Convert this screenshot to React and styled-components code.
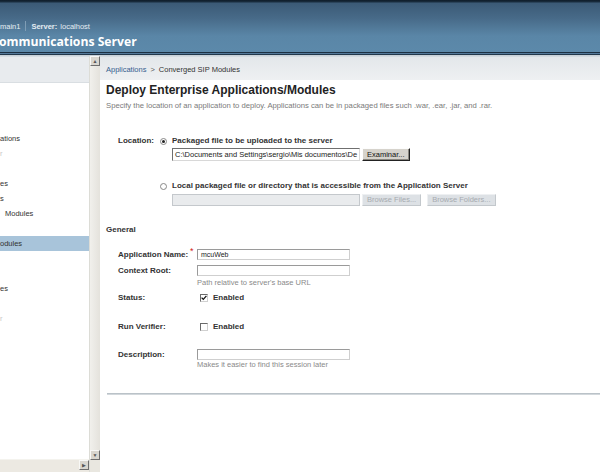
import React from 'react'
import styled, { createGlobalStyle } from 'styled-components'

const GlobalStyle = createGlobalStyle`
  html, body {
    margin: 0;
    padding: 0;
    overflow: hidden;
  }
  body {
    font-family: "Liberation Sans", Arial, sans-serif;
  }
`

const Page = styled.div`
  width: 600px;
  height: 472px;
  display: flex;
  flex-direction: column;
  overflow: hidden;
  background: #fff;
`

const Header = styled.div`
  height: 56px;
  flex: none;
  background: linear-gradient(
    to bottom,
    #0e1c29 0px,
    #1a2e40 2px,
    #3b5a76 3px,
    #476a88 18px,
    #5a86a7 36px,
    #5c89aa 52px,
    #1c3042 52px,
    #1c3042 53px,
    #54799a 53px,
    #54799a 54px,
    #22384b 54px,
    #22384b 55px,
    #c9d2d9 55px
  );
  padding: 21px 0 0 0;
  box-sizing: border-box;
  color: #fff;
  overflow: hidden;
`

const InfoLine = styled.div`
  display: flex;
  align-items: center;
  height: 10px;
  font-size: 7.5px;
  color: #e4ecf2;
  white-space: nowrap;
`

const InfoSep = styled.span`
  width: 1px;
  height: 10px;
  background: #7f9db5;
  margin: 0 5px 0 5px;
`

const InfoKey = styled.b`
  font-weight: 700;
  margin-right: 3px;
`

const ProductName = styled.div`
  margin-top: 4px;
  font-family: "Open Sans", "Liberation Sans", sans-serif;
  font-weight: 700;
  font-size: 12.2px;
  line-height: 14px;
  color: #fff;
  white-space: nowrap;
  margin-left: -1px;
`

const Body = styled.div`
  flex: 1;
  display: flex;
  min-height: 0;
`

const Sidebar = styled.div`
  width: 89px;
  flex: none;
  display: flex;
  flex-direction: column;
  background: #fff;
`

const SidebarTop = styled.div`
  height: 27px;
  flex: none;
  background: #e8ebee;
  border-top: 1px solid #d6dde2;
  border-bottom: 1px solid #d9dee2;
  box-sizing: border-box;
`

const NavList = styled.div`
  flex: 1;
  padding-top: 48px;
  overflow: hidden;
`

const NavItem = styled.div`
  height: 15px;
  line-height: 15px;
  font-size: 7.5px;
  white-space: nowrap;
  color: ${p => (p.$faint ? '#c8c8c8' : '#333')};
  padding-left: ${p => p.$indent || 0}px;
  background: ${p => (p.$selected ? '#a8c4da' : 'transparent')};
`

const HScroll = styled.div`
  height: 12px;
  flex: none;
  display: flex;
  justify-content: flex-end;
  background: #ece9e2;
  border-top: 1px solid #f4f3ee;
`

const ScrollBtn = styled.div`
  width: 10px;
  height: 10px;
  flex: none;
  box-sizing: border-box;
  background: #d9d6cf;
  border: 1px solid;
  border-color: #f8f8f6 #6e6e6e #6e6e6e #f8f8f6;
  display: flex;
  align-items: center;
  justify-content: center;
  font-size: 5px;
  color: #555;
  line-height: 1;
`

const VScroll = styled.div`
  width: 11px;
  flex: none;
  display: flex;
  flex-direction: column;
  background: linear-gradient(to right, #f1f0ec, #e4e2dc);
  border-left: 1px solid #dcdcd6;
  box-sizing: border-box;
`

const Track = styled.div`
  flex: 1;
`

const Corner = styled.div`
  height: 12px;
  flex: none;
  background: #e9e7e0;
`

const Main = styled.div`
  flex: 1;
  display: flex;
  flex-direction: column;
  min-width: 0;
`

const Breadcrumb = styled.div`
  height: 24px;
  flex: none;
  box-sizing: border-box;
  background: linear-gradient(to bottom, #e3e7ea, #eef0f2);
  border-top: 1px solid #d3dadf;
  padding: 8px 0 0 6px;
  font-size: 7.5px;
  line-height: 10px;
  color: #333;
  white-space: nowrap;
`

const Crumb = styled.span`
  color: #35608f;
`

const Arrow = styled.span`
  margin: 0 4px;
  color: #555;
`

const Content = styled.div`
  flex: 1;
  padding: 3px 0 0 6px;
`

const Title = styled.h1`
  margin: 0;
  font-size: 12px;
  line-height: 14px;
  font-weight: 700;
  color: #222;
  white-space: nowrap;
`

const Intro = styled.div`
  margin-top: 4px;
  font-size: 7.7px;
  line-height: 10px;
  color: #7a7a7a;
  white-space: nowrap;
`

const LocationBlock = styled.div`
  margin-top: 25px;
  padding-left: 12px;
`

const ChoiceRow = styled.div`
  display: grid;
  grid-template-columns: 42px 12px auto;
  align-items: center;
  margin-top: ${p => p.$gap || 0}px;
`

const Label = styled.span`
  font-size: 8px;
  line-height: 10px;
  font-weight: 700;
  color: #333;
  white-space: nowrap;
`

const Radio = styled.span`
  width: 7px;
  height: 7px;
  border-radius: 50%;
  border: 1px solid #888;
  box-sizing: border-box;
  background: #fff;
  display: flex;
  align-items: center;
  justify-content: center;
  &::after {
    content: '';
    width: 3px;
    height: 3px;
    border-radius: 50%;
    background: ${p => (p.$checked ? '#222' : 'transparent')};
  }
`

const FileRow = styled.div`
  display: flex;
  gap: ${p => p.$gap || 2}px;
  margin: ${p => p.$top}px 0 0 54px;
`

const FileField = styled.div`
  width: 188px;
  height: ${p => p.$h}px;
  box-sizing: border-box;
  border: 1px solid;
  border-color: ${p => (p.$disabled ? '#c4c8cc' : '#6f6f6f #d8d8d8 #d8d8d8 #6f6f6f')};
  background: ${p => (p.$disabled ? '#e9ebed' : '#fff')};
  font-size: 7.5px;
  line-height: ${p => p.$h - 2}px;
  padding-left: 2px;
  color: #222;
  white-space: nowrap;
  overflow: hidden;
`

const Button = styled.div`
  height: ${p => p.$h}px;
  box-sizing: border-box;
  padding: 0 4px;
  font-size: 7.5px;
  line-height: ${p => p.$h - 2}px;
  white-space: nowrap;
  border: 1px solid;
  ${p =>
    p.$disabled
      ? `
    background: #dde1e5;
    color: #a7abb0;
    border-color: #eef0f2 #c3c8cc #c3c8cc #eef0f2;
    margin-left: ${p.$left || 0}px;
  `
      : `
    background: #d6d3cc;
    color: #111;
    border-color: #fdfdfd #222 #222 #fdfdfd;
    box-shadow: inset -1px -1px 0 #8a877f;
  `}
`

const Section = styled.div`
  margin-top: 19px;
  font-size: 8px;
  line-height: 10px;
  font-weight: 700;
  color: #333;
`

const Form = styled.div`
  margin-top: 14px;
  padding-left: 12px;
  display: flex;
  flex-direction: column;
`

const Field = styled.div`
  display: grid;
  grid-template-columns: 79px auto;
  align-items: center;
  margin-top: ${p => p.$gap || 0}px;
`

const LabelWrap = styled.span`
  position: relative;
  display: inline-flex;
`

const Required = styled.span`
  position: absolute;
  left: 72px;
  top: -4px;
  color: #d02020;
  font-size: 9px;
  line-height: 10px;
`

const TextBox = styled.div`
  width: 153px;
  height: 11px;
  box-sizing: border-box;
  border: 1px solid;
  border-color: #9a9a9a #cfcfcf #cfcfcf #9a9a9a;
  background: #fff;
  font-size: 7px;
  line-height: 9px;
  padding-left: 3px;
  color: #222;
`

const Help = styled.div`
  margin: ${p => p.$top || 0}px 0 0 79px;
  font-size: 7.5px;
  line-height: 10px;
  color: #8a8a8a;
  white-space: nowrap;
`

const Check = styled.span`
  display: inline-flex;
  align-items: center;
  gap: 5px;
  padding-left: 3px;
`

const Box = styled.span`
  width: 8px;
  height: 8px;
  box-sizing: border-box;
  border: 1px solid;
  border-color: #6a6a6a #d0d0d0 #d0d0d0 #6a6a6a;
  background: #fff;
  display: flex;
  align-items: center;
  justify-content: center;
`

const Rule = styled.div`
  margin-top: 23px;
  height: 2px;
  background: linear-gradient(to bottom, #aeb7be, #dfe3e6);
  margin-left: 1px;
`

const navItems = [
  { text: 'ations' },
  { text: 'r', faint: true },
  { text: '' },
  { text: 'es' },
  { text: 's' },
  { text: 'Modules', indent: 5 },
  { text: '' },
  { text: 'odules', selected: true },
  { text: '' },
  { text: '' },
  { text: 'es' },
  { text: '' },
  { text: 'r', faint: true },
]

const CheckMark = () => (
  <svg width="6" height="6" viewBox="0 0 6 6">
    <path d="M0.6 2.6 L2.3 4.4 L5.4 0.8" fill="none" stroke="#111" strokeWidth="1.3" />
  </svg>
)

export default function App() {
  return (
    <Page>
      <GlobalStyle />
      <Header>
        <InfoLine>
          <span>main1</span>
          <InfoSep />
          <InfoKey>Server:</InfoKey>
          <span>localhost</span>
        </InfoLine>
        <ProductName>ommunications Server</ProductName>
      </Header>
      <Body>
        <Sidebar>
          <SidebarTop />
          <NavList>
            {navItems.map((it, i) => (
              <NavItem key={i} $faint={it.faint} $indent={it.indent} $selected={it.selected}>
                {it.text}
              </NavItem>
            ))}
          </NavList>
          <HScroll>
            <ScrollBtn>▶</ScrollBtn>
          </HScroll>
        </Sidebar>
        <VScroll>
          <ScrollBtn>▲</ScrollBtn>
          <Track />
          <ScrollBtn>▼</ScrollBtn>
          <Corner />
        </VScroll>
        <Main>
          <Breadcrumb>
            <Crumb>Applications</Crumb>
            <Arrow>&gt;</Arrow>
            Converged SIP Modules
          </Breadcrumb>
          <Content>
            <Title>Deploy Enterprise Applications/Modules</Title>
            <Intro>
              Specify the location of an application to deploy. Applications can be in packaged files such .war, .ear, .jar, and .rar.
            </Intro>
            <LocationBlock>
              <ChoiceRow>
                <Label>Location:</Label>
                <Radio $checked />
                <Label>Packaged file to be uploaded to the server</Label>
              </ChoiceRow>
              <FileRow $top={2}>
                <FileField $h={13}>C:\Documents and Settings\sergio\Mis documentos\De</FileField>
                <Button $h={13}>Examinar...</Button>
              </FileRow>
              <ChoiceRow $gap={20}>
                <span />
                <Radio />
                <Label>Local packaged file or directory that is accessible from the Application Server</Label>
              </ChoiceRow>
              <FileRow $top={3}>
                <FileField $h={12} $disabled />
                <Button $h={12} $disabled>Browse Files...</Button>
                <Button $h={12} $disabled $left={4}>Browse Folders...</Button>
              </FileRow>
            </LocationBlock>
            <Section>General</Section>
            <Form>
              <Field>
                <LabelWrap>
                  <Label>Application Name:</Label>
                  <Required>*</Required>
                </LabelWrap>
                <TextBox>mcuWeb</TextBox>
              </Field>
              <Field $gap={5}>
                <Label>Context Root:</Label>
                <TextBox />
              </Field>
              <Help $top={2}>Path relative to server's base URL</Help>
              <Field $gap={5}>
                <Label>Status:</Label>
                <Check>
                  <Box>
                    <CheckMark />
                  </Box>
                  <Label>Enabled</Label>
                </Check>
              </Field>
              <Field $gap={19}>
                <Label>Run Verifier:</Label>
                <Check>
                  <Box />
                  <Label>Enabled</Label>
                </Check>
              </Field>
              <Field $gap={17}>
                <Label>Description:</Label>
                <TextBox />
              </Field>
              <Help>Makes it easier to find this session later</Help>
            </Form>
            <Rule />
          </Content>
        </Main>
      </Body>
    </Page>
  )
}
